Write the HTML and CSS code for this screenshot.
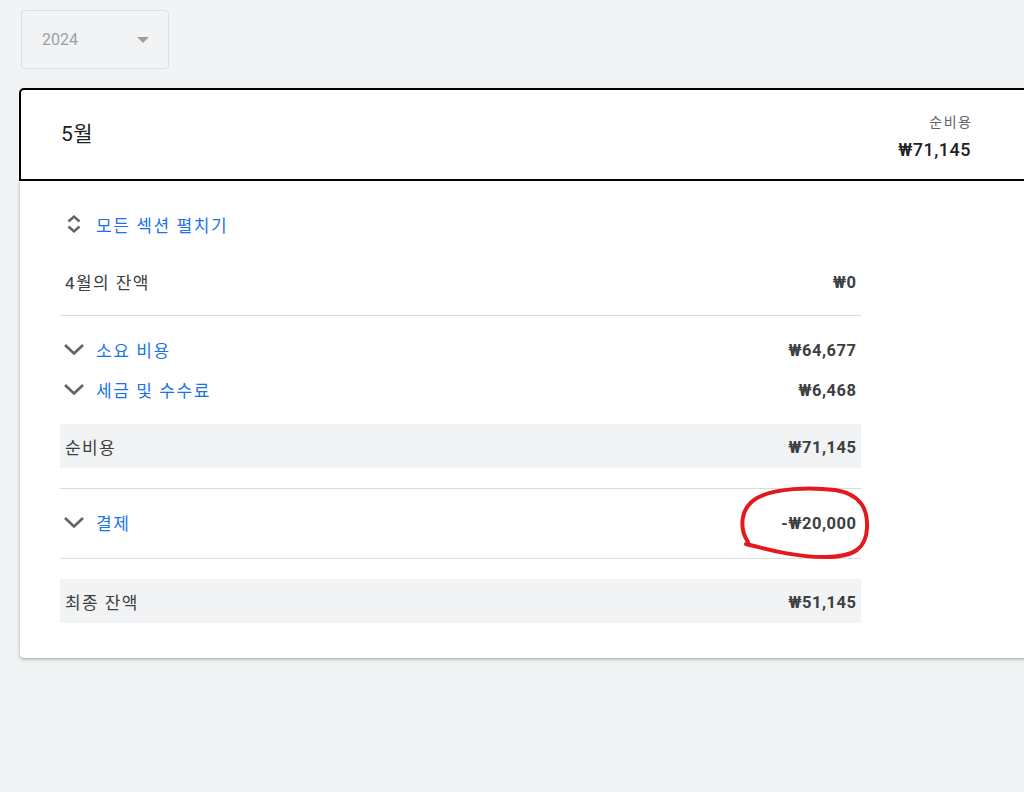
FILE: index.html
```html
<!DOCTYPE html>
<html lang="ko">
  <head>
    <meta charset="UTF-8" />
    <meta name="viewport" content="width=device-width, initial-scale=1.0" />
    <title>월별 명세서</title>
    <link rel="stylesheet" href="styles.css">
  </head>
  <body>
    <div class="year-select">
      <span class="year-value">2024</span>
      <span class="year-arrow"></span>
    </div>

    <div class="month-card">
      <div class="month-header">
        <h2 class="month-title">5월</h2>
        <div class="month-total">
          <div class="month-total-label">순비용</div>
          <div class="month-total-value">₩71,145</div>
        </div>
      </div>

      <div class="month-body">
        <div class="expand-all">
          <svg class="icon" width="24" height="24" viewBox="0 0 24 24">
            <path d="M6.5 9.5 L12 4.5 L17.5 9.5 M6.5 14.5 L12 19.5 L17.5 14.5" fill="none" stroke="#5f6368" stroke-width="2.4" />
          </svg>
          <span class="link-text">모든 섹션 펼치기</span>
        </div>

        <div class="row">
          <span class="row-label">4월의 잔액</span>
          <span class="row-value">₩0</span>
        </div>

        <div class="divider"></div>

        <div class="section">
          <div class="row toggle-row">
            <div class="toggle">
              <svg class="icon" width="24" height="24" viewBox="0 0 24 24">
                <path d="M3 8 L12 16.5 L21 8" fill="none" stroke="#5f6368" stroke-width="2.6" />
              </svg>
              <span class="link-text">소요 비용</span>
            </div>
            <span class="row-value">₩64,677</span>
          </div>
          <div class="row toggle-row">
            <div class="toggle">
              <svg class="icon" width="24" height="24" viewBox="0 0 24 24">
                <path d="M3 8 L12 16.5 L21 8" fill="none" stroke="#5f6368" stroke-width="2.6" />
              </svg>
              <span class="link-text">세금 및 수수료</span>
            </div>
            <span class="row-value">₩6,468</span>
          </div>
        </div>

        <div class="row total-row">
          <span class="row-label">순비용</span>
          <span class="row-value">₩71,145</span>
        </div>

        <div class="divider divider-wide"></div>

        <div class="section">
          <div class="row toggle-row">
            <div class="toggle">
              <svg class="icon" width="24" height="24" viewBox="0 0 24 24">
                <path d="M3 8 L12 16.5 L21 8" fill="none" stroke="#5f6368" stroke-width="2.6" />
              </svg>
              <span class="link-text">결제</span>
            </div>
            <span class="row-value">-₩20,000</span>
          </div>
        </div>

        <div class="divider divider-mid"></div>

        <div class="row total-row">
          <span class="row-label">최종 잔액</span>
          <span class="row-value">₩51,145</span>
        </div>
      </div>
    </div>

    <!-- hand-drawn mark around the payment amount -->
    <svg class="scribble" width="1024" height="792" viewBox="0 0 1024 792">
      <path d="M748 542 C739 528 740 508 757 498 C775 488 810 487 835 490 C860 494 868 508 867 528 C866 548 855 557 825 557 C795 557 770 550 746 544"
        fill="none" stroke="#e3191c" stroke-width="4" stroke-linecap="round" />
    </svg>
  </body>
</html>
```

FILE: styles.css
```css
body {
  margin: 0;
  padding: 10px 0 0 20px;
  background: #f1f3f4;
  font-family: Roboto, 'Noto Sans CJK KR', sans-serif;
  color: #3c4043;
  overflow: hidden;
  height: 782px;
  position: relative;
}

.year-select {
  display: flex;
  align-items: center;
  justify-content: space-between;
  box-sizing: border-box;
  width: 148px;
  height: 59px;
  margin-left: 1px;
  padding: 0 19px 0 20px;
  border: 1px solid #dadce0;
  border-radius: 4px;
}

.year-value {
  font-size: 16px;
  color: #9aa0a6;
}

.year-arrow {
  width: 0;
  height: 0;
  border-left: 6px solid transparent;
  border-right: 6px solid transparent;
  border-top: 6px solid #9e9e9e;
}

.month-card {
  width: 1040px;
  margin-top: 19px;
}

.month-header {
  display: flex;
  align-items: center;
  justify-content: space-between;
  box-sizing: border-box;
  height: 93px;
  margin-left: -1px;
  padding: 0 87px 0 40px;
  background: #fff;
  border: 2px solid #000;
  border-radius: 5px 0 0 0;
}

.month-title {
  margin: 0 0 6px;
  font-size: 21px;
  font-weight: 400;
  color: #202124;
  letter-spacing: 0.5px;
}

.month-total {
  text-align: right;
  padding-top: 2px;
}

.month-total-label {
  font-size: 14px;
  color: #5f6368;
  margin-bottom: 8px;
  letter-spacing: 1.5px;
  margin-right: -1.5px;
}

.month-total-value {
  font-size: 18px;
  font-weight: 500;
  color: #202124;
  letter-spacing: 0.5px;
}

.month-body {
  background: #fff;
  padding: 23px 0 35px 40px;
  border-radius: 0 0 0 4px;
  box-shadow: 0 1px 2px rgba(60, 64, 67, 0.3), 0 1px 4px 1px rgba(60, 64, 67, 0.15);
}

.month-body > * {
  width: 801px;
}

.icon {
  flex-shrink: 0;
}

.expand-all {
  display: flex;
  align-items: center;
  gap: 10px;
  height: 40px;
  padding-left: 2px;
  box-sizing: border-box;
}

.link-text {
  font-size: 17px;
  color: #1a73e8;
  letter-spacing: 1.6px;
}

.row {
  display: flex;
  align-items: center;
  justify-content: space-between;
  box-sizing: border-box;
  height: 44px;
  padding: 0 5px;
  margin-top: 15px;
}

.row-label {
  font-size: 17px;
  color: #3c4043;
  letter-spacing: 1.4px;
}

.row-value {
  font-size: 16.5px;
  font-weight: 700;
  color: #3c4043;
  letter-spacing: 0.5px;
  margin-right: -0.5px;
  padding-top: 2px;
}

.divider {
  height: 1px;
  background: #dadce0;
  margin-top: 12px;
}

.divider-wide {
  margin-top: 20px;
}

.divider-mid {
  margin-top: 16px;
}

.section {
  padding-top: 13px;
}

.toggle-row {
  height: 40px;
  margin-top: 0;
  padding-left: 2px;
}

.toggle {
  display: flex;
  align-items: center;
  gap: 10px;
}

.total-row {
  background: #f1f3f4;
}

.section + .total-row,
.divider + .total-row {
  margin-top: 15px;
}

.divider-mid + .total-row {
  margin-top: 20px;
}

.scribble {
  position: absolute;
  left: 0;
  top: 0;
  pointer-events: none;
}
```
